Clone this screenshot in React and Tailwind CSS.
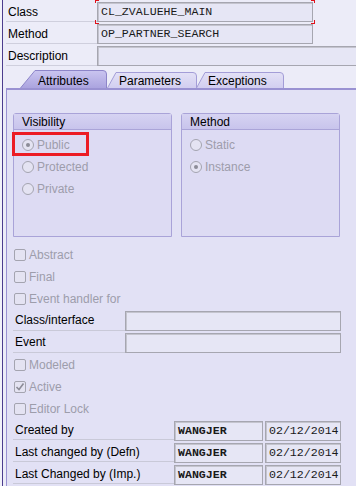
import React from "react";

const sans = { fontFamily: '"Liberation Sans", Arial, sans-serif' };
const mono = { fontFamily: '"Liberation Mono", "Courier New", monospace' };

function Field({ className = "", children, bold }) {
  return (
    <div
      className={`h-[20px] border border-[#a6a6b0] bg-[#e6e6f5] shadow-[inset_1px_1px_0_#c4c4ce] flex items-center pl-[3px] text-[11.6px] text-[#1a1a1a] ${bold ? "font-bold" : ""} ${className}`}
      style={mono}
    >
      {children}
    </div>
  );
}

function Radio({ checked, label }) {
  return (
    <div className="h-[22px] flex items-center">
      <span className="w-[12px] h-[12px] rounded-full border border-[#a4a4b0] bg-[#e4e3f2] flex items-center justify-center">
        {checked && <span className="w-[4px] h-[4px] rounded-full bg-[#8c8c98]" />}
      </span>
      <span className="ml-[3px] text-[12px] text-[#9d9dab] leading-none">{label}</span>
    </div>
  );
}

function Check({ checked, label }) {
  return (
    <div className="h-[22px] flex items-center">
      <span className="w-[12px] h-[12px] rounded-[2px] border border-[#a4a4b0] bg-[#e4e3f2] flex items-center justify-center">
        {checked && (
          <svg width="10" height="10" viewBox="0 0 10 10">
            <polyline points="1.5,5 4,7.5 8.5,1.5" fill="none" stroke="#8c8c98" strokeWidth="1.6" />
          </svg>
        )}
      </span>
      <span className="ml-[3px] text-[12px] text-[#9d9dab] leading-none">{label}</span>
    </div>
  );
}

function Group({ title, children, overlay }) {
  return (
    <div className="relative w-[159px] h-[124px] border border-[#a9a3d8] rounded-t-[3px] bg-[#dddbf3]">
      <div className="h-[16px] bg-gradient-to-b from-[#d6d3f2] to-[#c8c4ec] border-b border-[#aaa4d8] flex items-center pl-[8px] text-[12px] text-black leading-none">
        {title}
      </div>
      <div className="pl-[8px] pt-[4px]">{children}</div>
      {overlay}
    </div>
  );
}

function Tab({ active, width, label, textLeft }) {
  const h = active ? 18 : 16;
  const slant = active ? 15 : 9;
  return (
    <div className="relative" style={{ width: width, height: h }}>
      <svg className="absolute inset-0" width={width} height={h} viewBox={`0 0 ${width} ${h}`}>
        <defs>
          <linearGradient id={active ? "ga" : "gi"} x1="0" y1="0" x2="0" y2="1">
            <stop offset="0" stopColor={active ? "#cac5f0" : "#e3e1f6"} />
            <stop offset="1" stopColor={active ? "#aba4df" : "#d2cef0"} />
          </linearGradient>
        </defs>
        <path
          d={`M0.5 ${h} L${slant} 0.5 H${width - 4} Q${width - 0.5} 0.5 ${width - 0.5} 4 V${h}`}
          fill={`url(#${active ? "ga" : "gi"})`}
          stroke={active ? "#8d85c9" : "#a39dd7"}
          strokeWidth="1"
        />
      </svg>
      <span
        className="absolute text-[12px] text-black leading-none"
        style={{ left: textLeft, top: active ? 5 : 3 }}
      >
        {label}
      </span>
    </div>
  );
}

export default function App() {
  return (
    <div className="w-[356px] h-[486px] overflow-hidden flex bg-[#ececf8]" style={sans}>
      <div className="w-[2px] bg-[#f2f2fa]" />
      <div className="w-[1px] bg-[#4c3d8e]" />
      <div className="flex-1 flex flex-col">
        {/* header rows */}
        <div className="pt-[2px] flex flex-col gap-[2px] pl-[3px]">
          <div className="flex h-[20px]">
            <div className="w-[91px] h-[20px] border-b border-[#cfcfdd] pl-[2px] flex items-center text-[12px] text-black">Class</div>
            <div className="relative">
              <Field className="w-[216px]">CL_ZVALUEHE_MAIN</Field>
              <span className="absolute left-[-2px] top-[-2px] w-[4px] h-[3px] border-l border-t border-[#e0101a]" />
              <span className="absolute right-[-2px] top-[-2px] w-[4px] h-[3px] border-r border-t border-[#e0101a]" />
              <span className="absolute left-[-2px] bottom-[-2px] w-[4px] h-[4px] border-l border-b border-[#e0101a]" />
              <span className="absolute right-[-2px] bottom-[-2px] w-[4px] h-[4px] border-r border-b border-[#e0101a]" />
            </div>
          </div>
          <div className="flex h-[20px]">
            <div className="w-[91px] h-[20px] border-b border-[#cfcfdd] pl-[2px] flex items-center text-[12px] text-black">Method</div>
            <Field className="w-[216px]">OP_PARTNER_SEARCH</Field>
          </div>
          <div className="flex h-[20px]">
            <div className="w-[91px] h-[20px] border-b border-[#cfcfdd] pl-[2px] flex items-center text-[12px] text-black">Description</div>
            <Field className="flex-1 border-r-0" />
          </div>
        </div>

        {/* tabs */}
        <div className="h-[22px] flex items-end pl-[17px] relative z-10">
          <Tab active width={87} label="Attributes" textLeft={18} />
          <Tab width={90} label="Parameters" textLeft={12} />
          <div className="ml-[-1px]">
            <Tab width={88} label="Exceptions" textLeft={12} />
          </div>
        </div>

        {/* panel */}
        <div className="ml-[3px] flex-1 border-t-2 border-l border-[#9a92d2] bg-[#e2e1f5]">
          <div className="pl-[6px] pt-[23px] flex gap-[9px]">
            <Group
              title="Visibility"
              overlay={
                <span className="absolute left-[-2px] top-[18px] w-[77px] h-[24px] border-[3px] border-[#ec1c24]" />
              }
            >
              <Radio checked label="Public" />
              <Radio label="Protected" />
              <Radio label="Private" />
            </Group>
            <Group title="Method">
              <Radio label="Static" />
              <Radio checked label="Instance" />
            </Group>
          </div>

          <div className="pl-[7px] pt-[7px] flex flex-col">
            <Check label="Abstract" />
            <Check label="Final" />
            <Check label="Event handler for" />
          </div>

          <div className="pl-[6px] flex flex-col">
            <div className="flex h-[22px]">
              <div className="w-[112px] h-[21px] border-b border-[#c9c9d8] pl-[2px] flex items-center text-[12px] text-black">Class/interface</div>
              <Field className="w-[216px] h-[19px] mt-[1px]" />
            </div>
            <div className="flex h-[22px]">
              <div className="w-[112px] h-[21px] border-b border-[#c9c9d8] pl-[2px] flex items-center text-[12px] text-black">Event</div>
              <Field className="w-[216px] h-[19px] mt-[1px]" />
            </div>
          </div>

          <div className="pl-[7px] flex flex-col">
            <Check label="Modeled" />
            <Check checked label="Active" />
            <Check label="Editor Lock" />
          </div>

          <div className="pl-[6px] flex flex-col">
            {[
              ["Created by", "WANGJER", "02/12/2014"],
              ["Last changed by (Defn)", "WANGJER", "02/12/2014"],
              ["Last Changed by (Imp.)", "WANGJER", "02/12/2014"],
            ].map(([l, u, d]) => (
              <div key={l} className="flex h-[22px]">
                <div className="w-[161px] h-[20px] border-b border-[#c9c9d8] pl-[2px] flex items-center text-[12px] text-black">{l}</div>
                <Field bold className="w-[89px] h-[19px] mt-[1px]">{u}</Field>
                <Field className="w-[76px] h-[19px] mt-[1px] ml-[2px]">{d}</Field>
              </div>
            ))}
          </div>
        </div>
      </div>
    </div>
  );
}
